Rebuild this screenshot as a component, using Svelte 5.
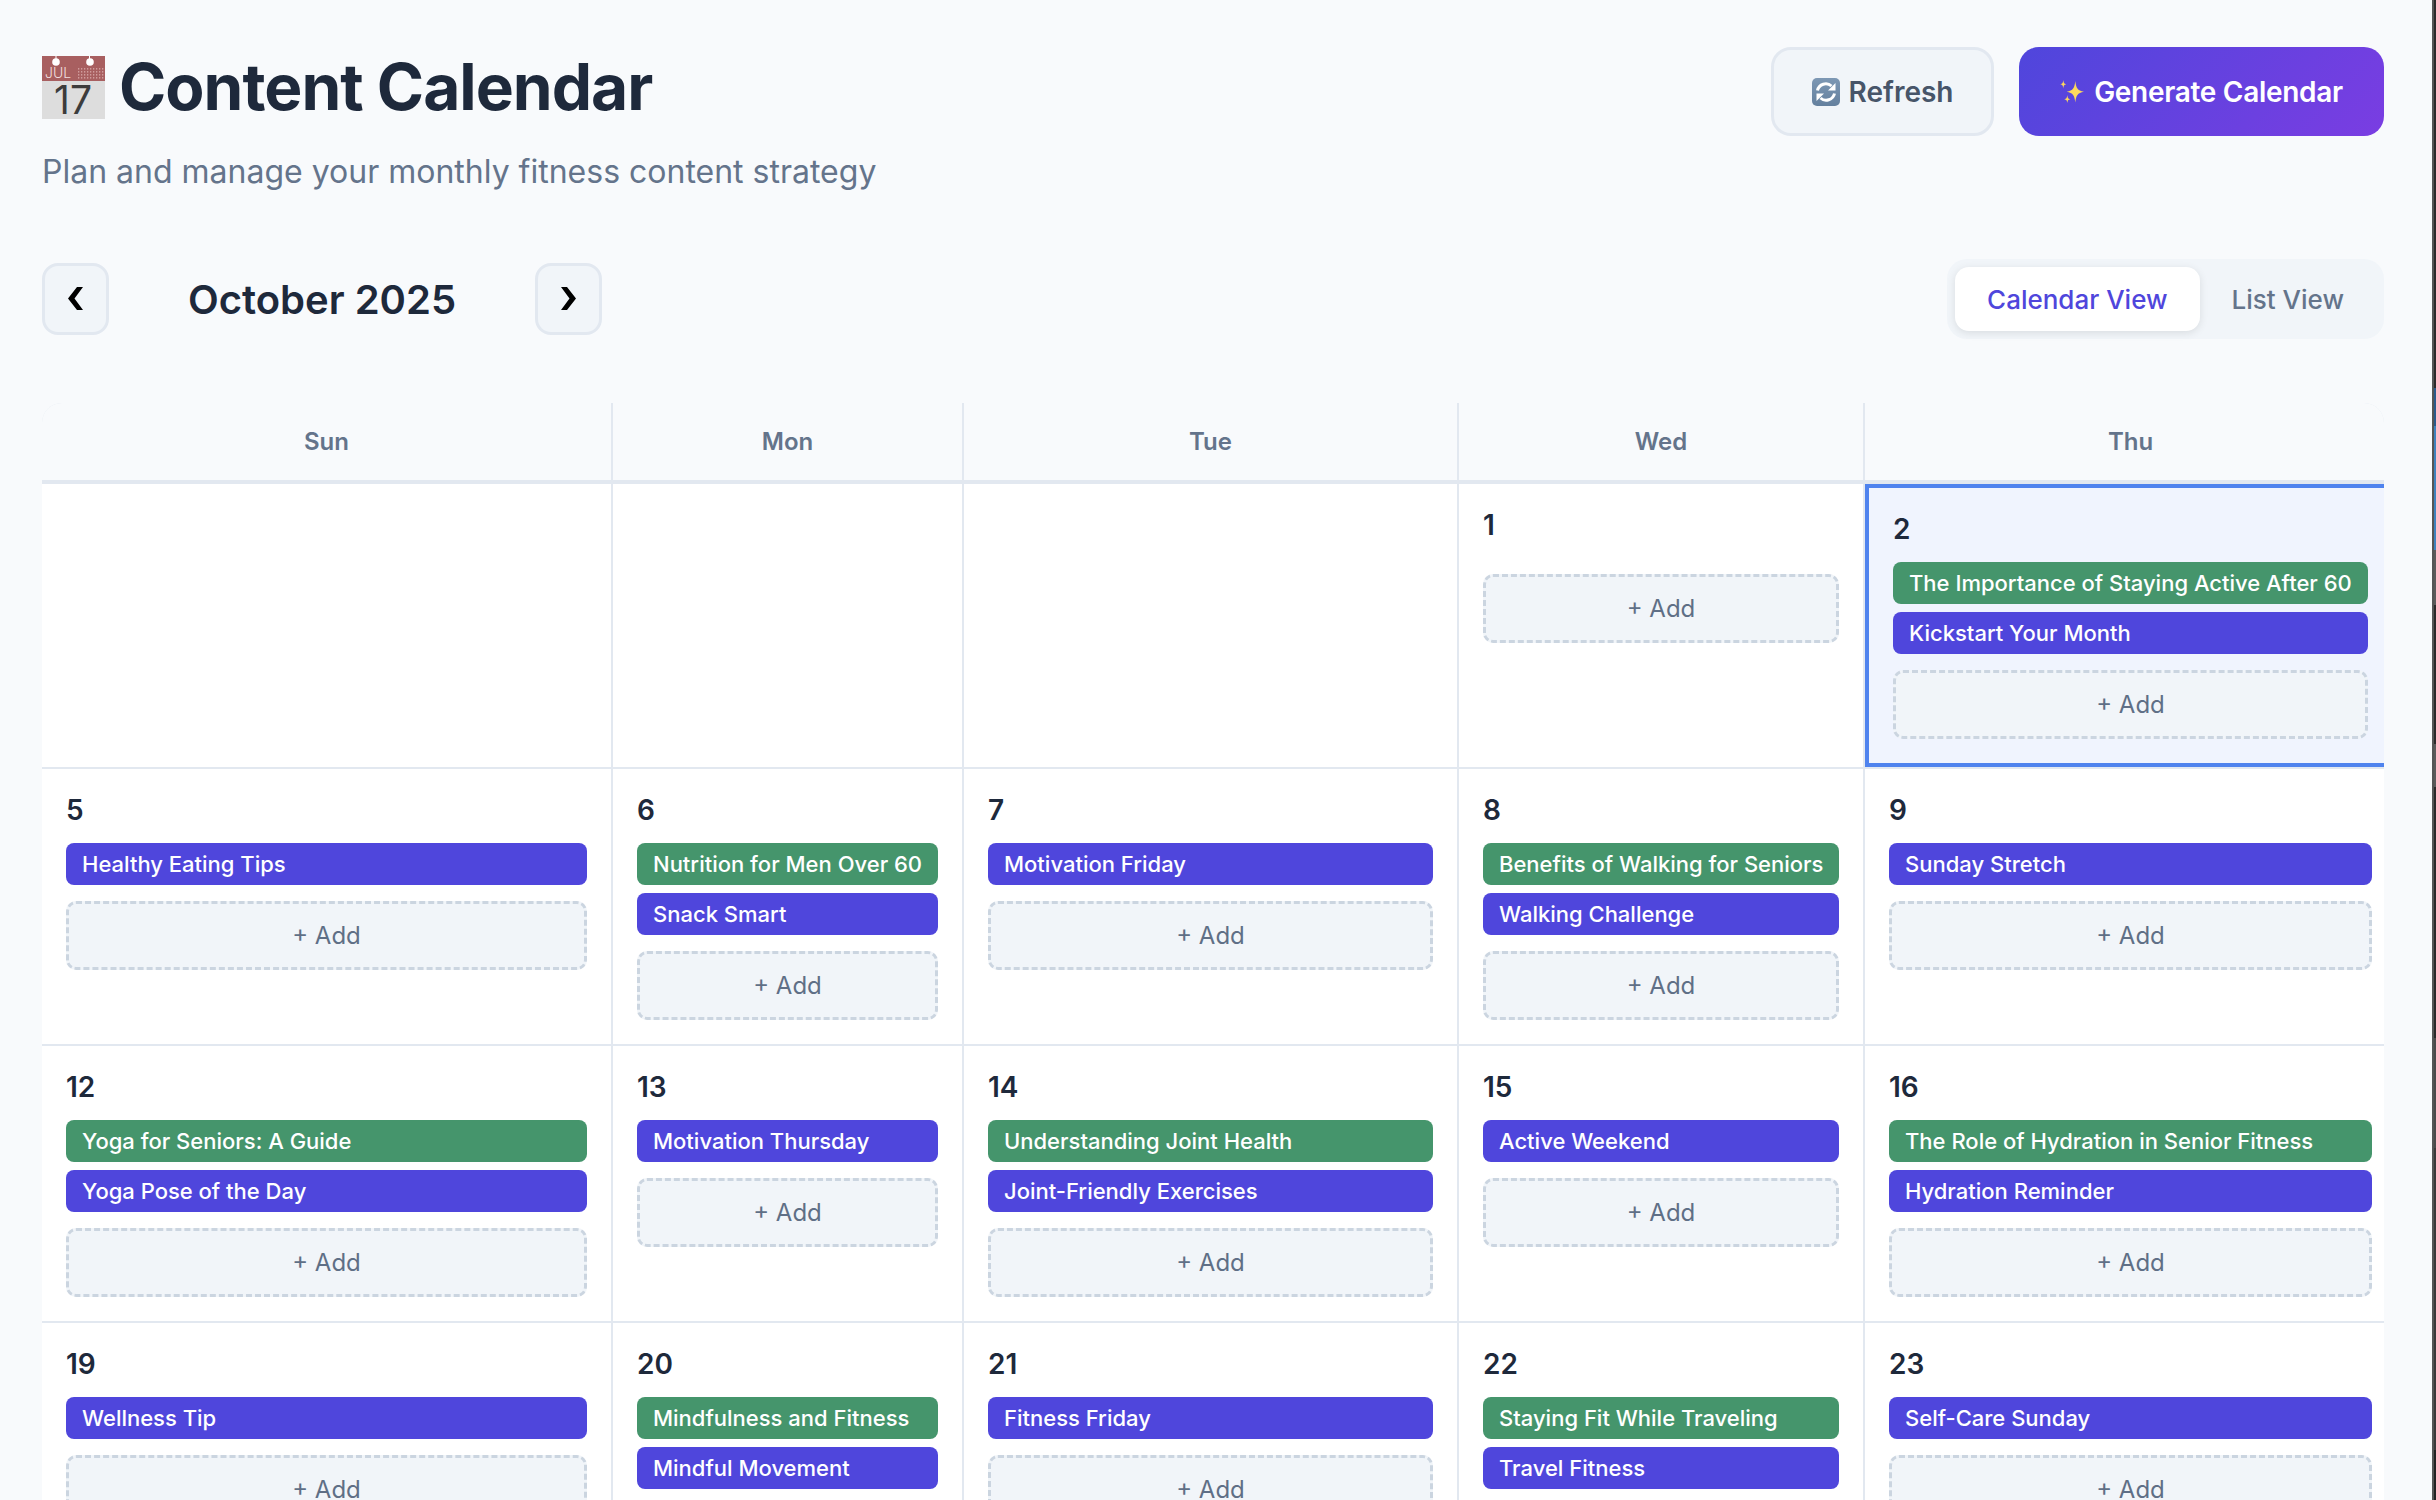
<script>
	const days = ['Sun', 'Mon', 'Tue', 'Wed', 'Thu'];
	const G = 'green';
	const P = 'purple';

	const cells = [
		{ empty: true },
		{ empty: true },
		{ empty: true },
		{ day: 1, events: [] },
		{
			day: 2,
			today: true,
			events: [
				{ title: 'The Importance of Staying Active After 60', kind: G },
				{ title: 'Kickstart Your Month', kind: P }
			]
		},
		{ day: 5, events: [{ title: 'Healthy Eating Tips', kind: P }] },
		{
			day: 6,
			events: [
				{ title: 'Nutrition for Men Over 60', kind: G },
				{ title: 'Snack Smart', kind: P }
			]
		},
		{ day: 7, events: [{ title: 'Motivation Friday', kind: P }] },
		{
			day: 8,
			events: [
				{ title: 'Benefits of Walking for Seniors', kind: G },
				{ title: 'Walking Challenge', kind: P }
			]
		},
		{ day: 9, events: [{ title: 'Sunday Stretch', kind: P }] },
		{
			day: 12,
			events: [
				{ title: 'Yoga for Seniors: A Guide', kind: G },
				{ title: 'Yoga Pose of the Day', kind: P }
			]
		},
		{ day: 13, events: [{ title: 'Motivation Thursday', kind: P }] },
		{
			day: 14,
			events: [
				{ title: 'Understanding Joint Health', kind: G },
				{ title: 'Joint-Friendly Exercises', kind: P }
			]
		},
		{ day: 15, events: [{ title: 'Active Weekend', kind: P }] },
		{
			day: 16,
			events: [
				{ title: 'The Role of Hydration in Senior Fitness', kind: G },
				{ title: 'Hydration Reminder', kind: P }
			]
		},
		{ day: 19, events: [{ title: 'Wellness Tip', kind: P }] },
		{
			day: 20,
			events: [
				{ title: 'Mindfulness and Fitness', kind: G },
				{ title: 'Mindful Movement', kind: P }
			]
		},
		{ day: 21, events: [{ title: 'Fitness Friday', kind: P }] },
		{
			day: 22,
			events: [
				{ title: 'Staying Fit While Traveling', kind: G },
				{ title: 'Travel Fitness', kind: P }
			]
		},
		{ day: 23, events: [{ title: 'Self-Care Sunday', kind: P }] }
	];

	// little dot matrix in the emoji's red band
	const dotX = [36, 39, 42, 45, 48, 51, 54, 57, 60];
	const dotY = [12, 15, 18, 21];
</script>

<div class="shell">
	<div class="page">
		<header class="top">
			<div>
				<h1>
					<svg class="cal-icon" viewBox="0 0 63 63" aria-hidden="true">
						<rect width="63" height="63" fill="#dddddd" />
						<rect width="63" height="25" fill="#a85f60" />
						<rect x="13.500" y="0" width="1" height="4" fill="#fff" />
						<rect x="47" y="0" width="1" height="4" fill="#fff" />
						<circle cx="14" cy="6" r="3.800" fill="#fff" />
						<circle cx="48" cy="6" r="3.800" fill="#fff" />
						<text x="3" y="22" class="cal-month">JUL</text>
						{#each dotX as x}
							{#each dotY as y}
								<rect {x} {y} width="1.300" height="1.600" fill="#cf9c9c" />
							{/each}
						{/each}
						<text x="31" y="58" class="cal-date">17</text>
					</svg>
					Content Calendar
				</h1>
				<p class="subtitle">Plan and manage your monthly fitness content strategy</p>
			</div>
			<div class="actions">
				<button class="btn refresh">
					<svg class="refresh-icon" viewBox="0 0 28 28" aria-hidden="true">
						<defs>
							<linearGradient id="refresh-bg" x1="0" y1="0" x2="0" y2="1">
								<stop offset="0" stop-color="#7d98b4" />
								<stop offset="1" stop-color="#64809e" />
							</linearGradient>
						</defs>
						<rect width="28" height="28" rx="5" fill="url(#refresh-bg)" />
						<path d="M5.500 12.500a8.500 8.500 0 0 1 14-4.500" fill="none" stroke="#fff" stroke-width="3" />
						<path d="M22.500 15.500a8.500 8.500 0 0 1-14 4.500" fill="none" stroke="#fff" stroke-width="3" />
						<path d="M23.500 5v7.500h-7.500z" fill="#fff" />
						<path d="M4.500 23v-7.500h7.500z" fill="#fff" />
					</svg>
					Refresh
				</button>
				<button class="btn generate">
					<svg class="spark-icon" viewBox="0 0 24 23" aria-hidden="true">
						<path d="M15.300 1c.9 7 2 9.600 8.700 10.700-6.700 1.100-7.800 3.700-8.700 10.700-.9-7-2-9.600-8.700-10.700 6.700-1.100 7.800-3.700 8.700-10.700z" fill="#fdd85d" />
						<path d="M3.300 0c.4 3 .7 3.800 3 4.300-2.300.5-2.600 1.300-3 4.300-.4-3-.7-3.800-3-4.300 2.300-.5 2.600-1.300 3-4.300z" fill="#fdd85d" />
						<path d="M7.300 15c.4 3 .7 3.800 3 4.200-2.300.4-2.600 1.200-3 3.800-.4-2.600-.7-3.400-3-3.800 2.300-.4 2.600-1.200 3-4.200z" fill="#fdd85d" />
					</svg>
					Generate Calendar
				</button>
			</div>
		</header>

		<div class="nav">
			<div class="month-nav">
				<button class="arrow" aria-label="Previous month">
					<svg viewBox="0 0 15 23" aria-hidden="true"><path d="M9 0h6L6.500 11.500 15 23H9L0 11.500z" /></svg>
				</button>
				<h2>October 2025</h2>
				<button class="arrow" aria-label="Next month">
					<svg viewBox="0 0 15 23" aria-hidden="true"><path d="M6 0H0l8.500 11.500L0 23h6l9-11.500z" /></svg>
				</button>
			</div>
			<div class="toggle">
				<button class="active">Calendar View</button>
				<button>List View</button>
			</div>
		</div>

		<div class="calendar">
			<div class="grid">
				{#each days as d}
					<div class="day-head">{d}</div>
				{/each}
				{#each cells as c}
					{#if c.empty}
						<div class="cell"></div>
					{:else}
						<div class="cell" class:today={c.today}>
							<div class="num">{c.day}</div>
							<div class="events">
								{#each c.events as e}
									<div class="event {e.kind}">{e.title}</div>
								{/each}
							</div>
							<button class="add">+ Add</button>
						</div>
					{/if}
				{/each}
			</div>
		</div>
	</div>
	<div class="window-edge"></div>
</div>

<style>
	:global(body) {
		margin: 0;
		background: #f8fafc;
	}

	.shell {
		display: flex;
		height: 1500px;
		overflow: hidden;
	}

	.page {
		flex: 1;
		min-width: 0;
		box-sizing: border-box;
		padding: 47px 48px 0 42px;
		font-family: Inter, 'Liberation Sans', sans-serif;
		color: #1e293b;
	}

	/* sliver of the desktop behind the browser window */
	.window-edge {
		flex: none;
		width: 2px;
		border-left: 2px solid #555;
		background: linear-gradient(
			#2b2b2b 0 388px,
			#2b5a8a 388px 426px,
			#3f82bd 426px 550px,
			#5a5a5a 550px 605px,
			#2a2a2a 605px 744px,
			#5a5a5a 744px 787px,
			#2a2a2a 787px 1038px,
			#4a4a4a 1038px 1148px,
			#3a3a3a 1148px 1450px,
			#222 1450px
		);
	}

	button {
		font-family: inherit;
		cursor: pointer;
	}

	.top {
		display: flex;
		justify-content: space-between;
		align-items: flex-start;
		margin-bottom: 68px;
	}

	h1 {
		display: flex;
		align-items: center;
		gap: 14px;
		margin: 0 0 25px;
		font-size: 64px;
		font-weight: 700;
		line-height: 80px;
		letter-spacing: -1px;
	}

	.cal-icon {
		width: 63px;
		height: 63px;
		flex: none;
	}

	.cal-month {
		font-size: 14px;
		fill: #f1dede;
		letter-spacing: 0;
		font-weight: 300;
	}

	.cal-date {
		font-size: 39px;
		fill: #3c3c3c;
		text-anchor: middle;
		font-weight: 400;
		letter-spacing: 0;
	}

	.subtitle {
		margin: 0;
		font-size: 32px;
		color: #64748b;
	}

	.actions {
		display: flex;
		gap: 25px;
	}

	.btn {
		display: flex;
		align-items: center;
		justify-content: center;
		height: 89px;
		border-radius: 20px;
		font-size: 28px;
		font-weight: 600;
		box-sizing: border-box;
	}

	.refresh {
		width: 223px;
		gap: 9px;
		background: #f1f5f9;
		border: 3px solid #e2e8f0;
		color: #475569;
	}

	.refresh-icon {
		width: 28px;
		height: 28px;
	}

	.generate {
		width: 365px;
		gap: 10px;
		border: 0;
		background: linear-gradient(135deg, #4f46dc, #7a3de2);
		color: #fff;
		letter-spacing: -0.3px;
	}

	.spark-icon {
		width: 24px;
		height: 23px;
	}

	.nav {
		display: flex;
		justify-content: space-between;
		align-items: center;
		margin-bottom: 64px;
	}

	.month-nav {
		display: flex;
		align-items: center;
	}

	h2 {
		width: 426px;
		margin: 0;
		text-align: center;
		font-size: 40px;
		font-weight: 600;
	}

	.arrow {
		display: flex;
		align-items: center;
		justify-content: center;
		width: 67px;
		height: 72px;
		padding: 0 0 2px;
		border: 3px solid #e2e8f0;
		border-radius: 16px;
		background: #f1f5f9;
	}

	.arrow svg {
		width: 15px;
		height: 23px;
		fill: #000;
	}

	.toggle {
		display: flex;
		padding: 8px;
		border-radius: 20px;
		background: #f1f5f9;
	}

	.toggle button {
		height: 64px;
		padding: 0 32px;
		border: 0;
		border-radius: 14px;
		background: none;
		color: #64748b;
		font-size: 26px;
		font-weight: 500;
	}

	.toggle .active {
		background: #fff;
		color: #4f46dc;
		box-shadow: 0 2px 8px rgba(0, 0, 0, 0.1);
	}

	.calendar {
		overflow: hidden;
		border-radius: 20px 20px 0 0;
		background: #fff;
	}

	.grid {
		display: grid;
		grid-template-columns: 569px 349px 493px 404px 531px;
		gap: 2px;
		width: max-content;
		background: #e2e8f0;
	}

	.day-head {
		height: 77px;
		margin-bottom: 2px;
		display: flex;
		align-items: center;
		justify-content: center;
		background: #f8fafc;
		color: #64748b;
		font-size: 24px;
		font-weight: 600;
	}

	.cell {
		box-sizing: border-box;
		padding: 24px;
		background: #fff;
		min-width: 0;
	}

	.cell.today {
		border: 4px solid #4f83ee;
		background: #f0f4fe;
	}

	.num {
		margin-bottom: 16px;
		font-size: 28px;
		font-weight: 600;
		line-height: 34px;
	}

	.events {
		display: flex;
		flex-direction: column;
		gap: 8px;
	}

	.event {
		height: 42px;
		padding: 0 16px;
		border-radius: 8px;
		color: #fff;
		font-size: 22px;
		font-weight: 500;
		line-height: 42px;
		white-space: nowrap;
	}

	.event.green {
		background: #45956c;
	}

	.event.purple {
		background: #4f46dc;
	}

	.add {
		display: block;
		width: 100%;
		height: 69px;
		margin-top: 16px;
		border: 3px dashed #cbd5e0;
		border-radius: 10px;
		background: #f1f5f9;
		color: #5f6f86;
		font-size: 24px;
	}
</style>
